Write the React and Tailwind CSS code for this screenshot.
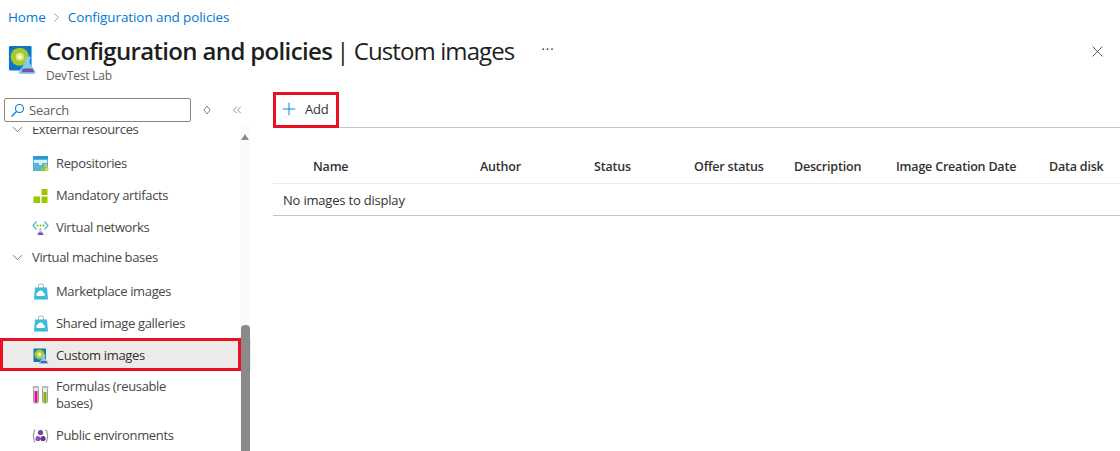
import { ChevronDown, ChevronRight, ChevronsLeft, Plus, X } from "lucide-react";

function DiscIcon({ size = 16 }) {
  return (
    <svg width={size} height={size} viewBox="0 0 32 32" className="shrink-0">
      <rect x="1" y="1" width="25" height="27" rx="1.5" fill="#0f76c6" />
      <circle cx="13" cy="13" r="10" fill="#a8c92c" />
      <circle cx="13" cy="13" r="4.5" fill="#dfe88c" />
      <circle cx="13" cy="13" r="1.8" fill="#fff" />
      <path d="M19 13h6v2l-1 1v4l6 9a2 2 0 0 1-2 3H14a2 2 0 0 1-2-3l7-9v-5z" fill="#7fd0ee" />
      <path d="M16 26h11l2 4H15z" fill="#7b4fa8" />
    </svg>
  );
}

function SearchIcon() {
  return (
    <svg width="15" height="15" viewBox="0 0 15 15" className="shrink-0">
      <circle cx="9.500" cy="5.500" r="4" fill="none" stroke="#0078d4" strokeWidth="1.100" />
      <path d="M6.500 8.500 1.500 13.500" stroke="#0078d4" strokeWidth="1.200" />
    </svg>
  );
}

function RepoIcon() {
  return (
    <svg width="16" height="16" viewBox="0 0 16 16" className="shrink-0">
      <rect x="0" y="0" width="15" height="15" fill="#59b4d9" />
      <rect x="0" y="0" width="15" height="3" fill="#2a9bd0" />
      <path d="M1 4h13v3H9v2H6V7H1z" fill="#d8f0fa" />
      <rect x="11" y="8" width="3" height="3" fill="#b8d432" />
      <rect x="8" y="11.5" width="3" height="3.5" fill="#a2c617" />
      <rect x="12" y="11.5" width="3.5" height="3.5" fill="#c5dc5a" />
    </svg>
  );
}

function ArtifactsIcon() {
  return (
    <svg width="16" height="16" viewBox="0 0 16 16" className="shrink-0">
      <rect x="0.500" y="8.500" width="6.500" height="6.500" fill="#97c800" />
      <rect x="8.500" y="8.500" width="6" height="6.500" fill="#97c800" />
      <rect x="8.500" y="1" width="6" height="6" fill="#97c800" />
    </svg>
  );
}

function NetworkIcon() {
  return (
    <svg width="17" height="16" viewBox="0 0 17 16" className="shrink-0">
      <path d="M4.500 1.500 1 5.500l3.500 4" fill="none" stroke="#59b4d9" strokeWidth="1.300" />
      <path d="M12.500 1.500 16 5.500l-3.500 4" fill="none" stroke="#59b4d9" strokeWidth="1.300" />
      <circle cx="5.500" cy="5.500" r="1" fill="#7fba00" />
      <circle cx="8.500" cy="5.500" r="1" fill="#7fba00" />
      <circle cx="11.500" cy="5.500" r="1" fill="#7fba00" />
      <path d="M7.500 8h2v3l2 4h-6l2-4z" fill="#8fd4ec" />
      <path d="M6.500 12.500h4l1 2.500h-6z" fill="#7b4fa8" />
    </svg>
  );
}

function BagIcon() {
  return (
    <svg width="16" height="17" viewBox="0 0 16 17" className="shrink-0">
      <path d="M5.500 5V3a2.500 2.200 0 0 1 5 0v2" fill="none" stroke="#b0b0b0" strokeWidth="1" />
      <path d="M2 4.500h12l1 12H1z" fill="#3cb9de" />
      <path d="M4.500 13a1.800 1.800 0 0 1 .3-3.500 3 3 0 0 1 5.800.4 1.600 1.600 0 0 1 .3 3.100z" fill="#fff" />
    </svg>
  );
}

function TubesIcon() {
  return (
    <svg width="17" height="18" viewBox="0 0 17 18" className="shrink-0">
      <path d="M.5 1h6.500M10 1h6.500" stroke="#8a8a8a" strokeWidth="1.200" />
      <rect x="1.500" y="1" width="5" height="16" rx="1.500" fill="#ededed" stroke="#a0a0a0" />
      <rect x="10.500" y="1" width="5" height="16" rx="1.500" fill="#ededed" stroke="#a0a0a0" />
      <rect x="2.500" y="5" width="3" height="11.500" fill="#e3128c" />
      <rect x="11.500" y="6" width="3" height="10.500" fill="#7fba00" />
    </svg>
  );
}

function EnvIcon() {
  return (
    <svg width="17" height="16" viewBox="0 0 17 16" className="shrink-0">
      <path d="M2.500 2Q0 8 2.500 14h1M2.500 2h1M14.500 2q2.500 6 0 12h-1M14.500 2h-1" fill="none" stroke="#8a8a8a" strokeWidth="1" />
      <circle cx="8.500" cy="4.500" r="2.600" fill="#7b3fa8" />
      <circle cx="6" cy="10.500" r="2.600" fill="#8e4fc0" />
      <circle cx="11" cy="10.500" r="2.600" fill="#65308f" />
      <circle cx="8.500" cy="8.500" r="1" fill="#e6d5f2" />
    </svg>
  );
}

function NavItem({ icon, label, active, tall }) {
  return (
    <div className={`flex items-center gap-[7px] pl-[32px] pr-[50px] ${tall ? "h-[48px] leading-[17px]" : "h-[32px] pt-[1px]"} ${active ? "bg-[#edebe9] text-[#323130] font-medium" : ""}`}>
      <span className="flex w-[17px] justify-center shrink-0">{icon}</span>
      <span>{label}</span>
    </div>
  );
}

function NavGroup({ label, className }) {
  return (
    <div className={`flex items-center gap-[6px] pl-[9px] pt-[1px] h-[30px] ${className || ""}`}>
      <ChevronDown size={17} strokeWidth={1} className="text-[#484644]" />
      <span>{label}</span>
    </div>
  );
}

const columns = [
  ["Name", "w-[207px] pl-[40px]"],
  ["Author", "w-[114px]"],
  ["Status", "w-[100px]"],
  ["Offer status", "w-[100px]"],
  ["Description", "w-[102px]"],
  ["Image Creation Date", "w-[153px]"],
  ["Data disk", "w-[70px]"],
];

export default function App() {
  return (
    <div className="h-[451px] w-[1120px] overflow-hidden bg-white text-[#323130] text-[13px] font-['Open_Sans','Noto_Sans',sans-serif] tracking-[-0.2px]">
      {/* breadcrumb */}
      <div className="flex items-center gap-[3.500px] pl-[8px] pt-[9px] h-[26px] text-[#0078d4] text-[13.500px] tracking-[-0.1px]">
        <span>Home</span>
        <ChevronRight size={15} strokeWidth={1} className="text-[#605e5c]" />
        <span>Configuration and policies</span>
      </div>

      {/* title */}
      <div className="flex h-[62px] pl-[8px] pr-[13px]">
        <div className="pt-[19px]">
          <DiscIcon size={29} />
        </div>
        <div className="ml-[9px] pt-[8px]">
          <div className="flex items-baseline text-[24px] leading-[34px] text-[#201f1e] tracking-[-0.650px]">
            <span className="font-semibold">Configuration and policies</span>
            <span className="ml-[4px] tracking-[-0.900px]">| Custom images</span>
            <span className="ml-[27px] text-[13px] tracking-[1px] relative -top-[6px]">···</span>
          </div>
          <div className="text-[12px] leading-[14px] text-[#605e5c] -mt-[3px]">DevTest Lab</div>
        </div>
        <X size={19} strokeWidth={1} className="ml-auto mt-[16px] text-[#323130]" />
      </div>

      <div className="flex h-[363px]">
        {/* sidebar */}
        <div className="w-[273px] shrink-0">
          <div className="flex items-start h-[39px] pl-[4px] pt-[10px]">
            <div className="flex items-center gap-[4px] w-[187px] h-[24px] border border-[#8a8886] rounded-[2px] pl-[5px] pt-[1px] text-[#605e5c]">
              <SearchIcon />
              <span>Search</span>
            </div>
            <div className="flex items-center h-[24px] ml-[12px] gap-[19px] text-[#605e5c]">
              <svg width="8" height="10" viewBox="0 0 8 10">
                <path d="M4 1 7 5 4 9 1 5z" fill="none" stroke="#8a8886" strokeWidth="1" />
              </svg>
              <ChevronsLeft size={14} strokeWidth={1.200} />
            </div>
          </div>

          <div className="relative w-[251px] h-[324px] overflow-hidden text-[#484644] tracking-[-0.350px]">
            <div className="-mt-[13px]">
              <NavGroup label="External resources" />
              <div className="mt-[3px]" />
              <NavItem icon={<RepoIcon />} label="Repositories" />
              <NavItem icon={<ArtifactsIcon />} label="Mandatory artifacts" />
              <NavItem icon={<NetworkIcon />} label="Virtual networks" />
              <NavGroup label="Virtual machine bases" className="mt-[-1px]" />
              <div className="mt-[3px]" />
              <NavItem icon={<BagIcon />} label="Marketplace images" />
              <NavItem icon={<BagIcon />} label="Shared image galleries" />
              <NavItem icon={<DiscIcon />} label="Custom images" active />
              <NavItem icon={<TubesIcon />} label="Formulas (reusable bases)" tall />
              <NavItem icon={<EnvIcon />} label="Public environments" />
            </div>

            {/* scrollbar */}
            <div className="absolute right-[1px] top-0 bottom-0 w-[10px] bg-[#fafafa]">
              <div className="absolute left-[1px] top-[7px] w-0 h-0 border-l-[4px] border-r-[4px] border-b-[6px] border-l-transparent border-r-transparent border-b-[#8a8a8a]" />
              <div className="absolute left-[1px] right-0 top-[198px] bottom-0 rounded-t-[4px] bg-[#8a8a8a]" />
            </div>
            {/* annotation */}
            <div className="absolute left-0 top-[211px] w-[241px] h-[33px] border-[3px] border-[#e81123]" />
          </div>
        </div>

        {/* main */}
        <div className="flex-1 min-w-0">
          <div className="h-[40px] border-b border-[#c8c6c4] relative">
            <div className="flex items-center gap-[6px] pl-[6px] pt-[5px] h-[39px] text-[#323130]">
              <Plus size={20} strokeWidth={1.100} className="text-[#0078d4] -mt-[2px]" />
              <span>Add</span>
            </div>
            <div className="absolute left-0 top-[4px] w-[66px] h-[36px] border-[3px] border-[#e81123]" />
          </div>

          <div className="flex items-center h-[56px] pt-[24px] border-b border-[#edebe9] font-semibold text-[#323130] text-[12.500px]">
            {columns.map(([name, cls]) => (
              <div key={name} className={`${cls} shrink-0`}>{name}</div>
            ))}
          </div>
          <div className="flex items-center h-[32px] pl-[10px] pt-[2px] border-b border-[#c8c6c4]">No images to display</div>
        </div>
      </div>
    </div>
  );
}
